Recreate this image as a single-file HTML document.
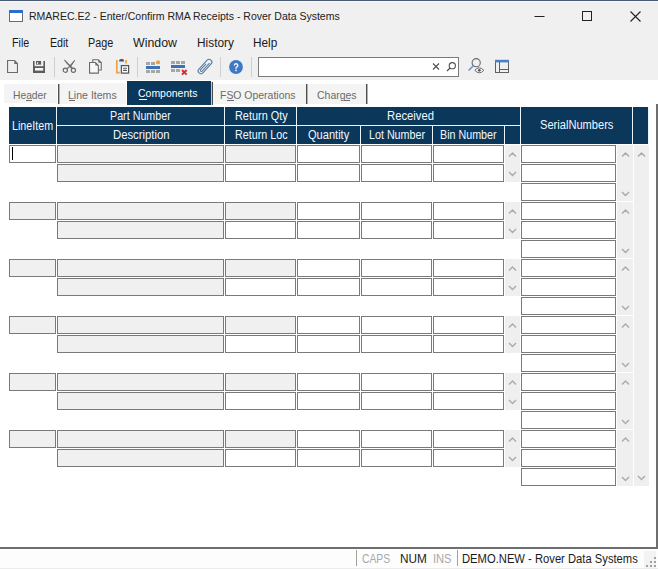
<!DOCTYPE html>
<html><head><meta charset="utf-8"><style>
html,body{margin:0;padding:0;background:#fff;width:658px;height:569px;overflow:hidden;position:relative;font-family:"Liberation Sans", sans-serif}
</style></head><body>
<div style="position:absolute;left:0px;top:0px;width:658px;height:80px;background:#f0f0f0"></div>
<div style="position:absolute;left:0px;top:0px;width:658px;height:1px;background:#4b5b73"></div>
<div style="position:absolute;left:0px;top:1px;width:658px;height:1px;background:#f6f7fb"></div>
<svg style="position:absolute;left:9px;top:10px" width="14" height="12" viewBox="0 0 14 12"><rect x="0.5" y="0.5" width="13" height="11" fill="#fff" stroke="#6b6b6b" stroke-width="1"/><rect x="0" y="0" width="14" height="3" fill="#2a6fd0"/></svg>
<svg style="position:absolute;left:530px;top:8px" width="120" height="18" viewBox="0 0 120 18"><path d="M4.5 8.5h10" stroke="#222" stroke-width="1"/><rect x="52.5" y="3.5" width="9" height="9" fill="none" stroke="#222" stroke-width="1"/><path d="M100.5 3.5l10 10M110.5 3.5l-10 10" stroke="#222" stroke-width="1.1"/></svg>
<div style="position:absolute;left:54px;top:57px;width:1px;height:20px;background:#d0d0d0"></div>
<div style="position:absolute;left:137px;top:57px;width:1px;height:20px;background:#d0d0d0"></div>
<div style="position:absolute;left:220px;top:57px;width:1px;height:20px;background:#d0d0d0"></div>
<div style="position:absolute;left:251px;top:57px;width:1px;height:20px;background:#d0d0d0"></div>
<svg style="position:absolute;left:7px;top:60px" width="11" height="13" viewBox="0 0 11 13"><path d="M0.55 0.55h7l2.9 2.9v9h-9.9z" fill="none" stroke="#6b6b6b" stroke-width="1.1"/><path d="M7.3 0.5v3.4h3.4z" fill="#6b6b6b"/></svg>
<svg style="position:absolute;left:33px;top:61px" width="12" height="12" viewBox="0 0 12 12"><rect x="0" y="0" width="12" height="12" fill="#5c5c5c"/><rect x="1.6" y="0" width="8.8" height="5.2" fill="#f0f0f0"/><rect x="3" y="0" width="5.1" height="3.6" fill="#5c5c5c"/><rect x="3.9" y="1.2" width="1.2" height="1.7" fill="#f0f0f0"/><rect x="2" y="7" width="8.2" height="2.6" fill="#f4f4f4"/></svg>
<svg style="position:absolute;left:62px;top:59px" width="15" height="15" viewBox="0 0 15 15"><path d="M1.8 0.9L2.9 0.7L10.6 8.4L9.6 9.9L4.6 4.6z" fill="#6b6b6b"/><path d="M12.4 0.9L13.2 1.5L8.6 8.3L7.0 7.2z" fill="#6b6b6b"/><path d="M7.6 7.8L4.8 9.7M9.9 9.0L10.6 9.6" stroke="#6b6b6b" stroke-width="1.2"/><circle cx="3.3" cy="11.2" r="2.1" fill="none" stroke="#6b6b6b" stroke-width="1.2"/><circle cx="11.4" cy="11.2" r="2.1" fill="none" stroke="#6b6b6b" stroke-width="1.2"/></svg>
<svg style="position:absolute;left:89px;top:59px" width="13" height="15" viewBox="0 0 13 15"><path d="M3.75 0.75h5.5l3 3v7.3h-8.5z" fill="#f4f4f4" stroke="#6b6b6b" stroke-width="1.1"/><path d="M9.4 0.4v3.4h3.4z" fill="#6b6b6b"/><path d="M0.55 3.55h5.8l3 3v7.6h-8.8z" fill="#f8f8f8" stroke="#6b6b6b" stroke-width="1.1"/><path d="M6.4 3.2v3.4h3.4z" fill="#6b6b6b"/></svg>
<svg style="position:absolute;left:115px;top:58px" width="15" height="17" viewBox="0 0 15 17"><rect x="2" y="2.5" width="9" height="12" fill="#e4f0fb"/><path d="M1.8 2v12.7h3" fill="none" stroke="#f0a048" stroke-width="1.7"/><path d="M11.1 2v3.4" fill="none" stroke="#f0a048" stroke-width="1.7"/><path d="M4.2 3.6v-1a1.6 1.6 0 0 1 1.6-1.6h1.6a1.6 1.6 0 0 1 1.6 1.6v1z" fill="#555"/><rect x="6.4" y="7.6" width="7.2" height="7.5" fill="#fff" stroke="#555" stroke-width="1.25"/><path d="M8.1 10.3h3.8M8.1 12.4h3.8" stroke="#555" stroke-width="1.1"/></svg>
<svg style="position:absolute;left:145px;top:59px" width="17" height="15" viewBox="0 0 17 15"><rect x="1" y="3" width="4" height="3" fill="#a6a6a6"/><rect x="6" y="3" width="4" height="3" fill="#a6a6a6"/><rect x="11" y="1.5" width="4" height="3.8" rx="1.3" fill="#eba048"/><rect x="1" y="7" width="14" height="3" fill="#3c72b4"/><rect x="1" y="11" width="4" height="3" fill="#a6a6a6"/><rect x="6" y="11" width="4" height="3" fill="#a6a6a6"/><rect x="11" y="11" width="4" height="3" fill="#a6a6a6"/></svg>
<svg style="position:absolute;left:170px;top:59px" width="19" height="17" viewBox="0 0 19 17"><rect x="1" y="2" width="4" height="3" fill="#a6a6a6"/><rect x="6" y="2" width="4" height="3" fill="#a6a6a6"/><rect x="11" y="2" width="4" height="3" fill="#a6a6a6"/><rect x="1" y="6" width="14" height="3" fill="#3c72b4"/><rect x="1" y="10" width="4" height="3" fill="#a6a6a6"/><rect x="6" y="10" width="4" height="3" fill="#a6a6a6"/><path d="M12 11l4.6 4.6M16.6 11l-4.6 4.6" stroke="#d42a3c" stroke-width="2"/></svg>
<svg style="position:absolute;left:196px;top:57px" width="18" height="19" viewBox="0 0 18 19"><g transform="translate(9,9.5) rotate(-47) scale(0.86)"><rect x="-10.2" y="-3.2" width="20.4" height="6.4" rx="3.2" fill="#e3f0fc" stroke="#5d7898" stroke-width="1.2"/><path d="M6.5 1.2H-6.2a1.2 1.2 0 0 1 0-2.4H3" fill="none" stroke="#5d7898" stroke-width="1.1"/></g></svg>
<svg style="position:absolute;left:229px;top:60px" width="15" height="15" viewBox="0 0 15 15"><circle cx="7" cy="7" r="6.9" fill="#3f78c4"/><path d="M5.3 5.5a1.75 1.75 0 1 1 2.3 1.7c-.45.2-.6.45-.6 1v.5" fill="none" stroke="#f4f8ff" stroke-width="1.4"/><rect x="6.25" y="9.6" width="1.5" height="1.6" fill="#f4f8ff"/></svg>
<div style="position:absolute;left:258px;top:57px;width:201px;height:20px;background:#fff;border:1px solid #7a7a7a;box-sizing:border-box"></div>
<svg style="position:absolute;left:430px;top:61px" width="28" height="12" viewBox="0 0 28 12"><path d="M3 2.5l6 6M9 2.5l-6 6" stroke="#505050" stroke-width="1.1"/><circle cx="22.3" cy="4.7" r="3.1" fill="none" stroke="#505050" stroke-width="1.1"/><path d="M20 7l-3 3" stroke="#505050" stroke-width="1.3"/></svg>
<svg style="position:absolute;left:466px;top:57px" width="20" height="18" viewBox="0 0 20 18"><circle cx="10.2" cy="5.7" r="4.1" fill="none" stroke="#626a76" stroke-width="1.1"/><path d="M7.3 8.8L2.6 13.5" stroke="#6a92c8" stroke-width="1.6"/><path d="M8.8 13.3q4.4-5 9 0q-4.5 5-9 0z" fill="#fff" stroke="#666" stroke-width="1"/><circle cx="13.3" cy="13.3" r="1.4" fill="#555"/></svg>
<svg style="position:absolute;left:494px;top:59px" width="16" height="15" viewBox="0 0 16 15"><rect x="1.5" y="1.5" width="13" height="12" fill="none" stroke="#606060" stroke-width="1"/><rect x="1" y="0.8" width="14" height="2.6" fill="#4a80c4"/><path d="M5.5 3v11M5.5 10.5h9" stroke="#606060" stroke-width="1"/></svg>
<div style="position:absolute;left:4px;top:84px;width:53px;height:19px;background:#f4f4f4"></div>
<div style="position:absolute;left:58px;top:84px;width:1px;height:20px;background:#505050"></div>
<div style="position:absolute;left:59px;top:84px;width:1px;height:20px;background:#b0b0b0"></div>
<div style="position:absolute;left:60px;top:83px;width:66px;height:21px;background:#f4f4f4"></div>
<div style="position:absolute;left:127px;top:81px;width:84px;height:24px;background:#0b375b"></div>
<div style="position:absolute;left:211px;top:82px;width:1px;height:23px;background:#b8c8d8"></div>
<div style="position:absolute;left:212px;top:82px;width:1px;height:23px;background:#4a4a4a"></div>
<div style="position:absolute;left:213px;top:84px;width:93px;height:20px;background:#f4f4f4"></div>
<div style="position:absolute;left:306px;top:84px;width:1px;height:20px;background:#505050"></div>
<div style="position:absolute;left:307px;top:84px;width:1px;height:20px;background:#b0b0b0"></div>
<div style="position:absolute;left:308px;top:84px;width:58px;height:20px;background:#f4f4f4"></div>
<div style="position:absolute;left:366px;top:84px;width:1px;height:20px;background:#505050"></div>
<div style="position:absolute;left:367px;top:84px;width:1px;height:20px;background:#b0b0b0"></div>
<div style="position:absolute;left:26px;top:100px;width:6px;height:1px;background:#6a6a6a"></div>
<div style="position:absolute;left:69px;top:100px;width:6px;height:1px;background:#6a6a6a"></div>
<div style="position:absolute;left:139px;top:99px;width:8px;height:1px;background:#fff"></div>
<div style="position:absolute;left:227px;top:100px;width:7px;height:1px;background:#6a6a6a"></div>
<div style="position:absolute;left:344px;top:100px;width:6px;height:1px;background:#6a6a6a"></div>
<div style="position:absolute;left:656px;top:104px;width:2px;height:445px;background:#6e6e6e"></div>
<div style="position:absolute;left:0px;top:547px;width:658px;height:2px;background:#6e6e6e"></div>
<div style="position:absolute;left:9px;top:107px;width:640px;height:37px;background:#eaf4fb"></div>
<div style="position:absolute;left:9px;top:107px;width:47px;height:37px;background:#0b375b"></div>
<div style="position:absolute;left:57px;top:107px;width:167px;height:18px;background:#0b375b"></div>
<div style="position:absolute;left:57px;top:126px;width:167px;height:18px;background:#0b375b"></div>
<div style="position:absolute;left:225px;top:107px;width:71px;height:18px;background:#0b375b"></div>
<div style="position:absolute;left:225px;top:126px;width:71px;height:18px;background:#0b375b"></div>
<div style="position:absolute;left:297px;top:107px;width:223px;height:18px;background:#0b375b"></div>
<div style="position:absolute;left:297px;top:126px;width:63px;height:18px;background:#0b375b"></div>
<div style="position:absolute;left:361px;top:126px;width:71px;height:18px;background:#0b375b"></div>
<div style="position:absolute;left:433px;top:126px;width:71px;height:18px;background:#0b375b"></div>
<div style="position:absolute;left:505px;top:126px;width:15px;height:18px;background:#0b375b"></div>
<div style="position:absolute;left:521px;top:107px;width:111px;height:37px;background:#0b375b"></div>
<div style="position:absolute;left:633px;top:107px;width:15px;height:37px;background:#0b375b"></div>
<div style="position:absolute;left:9px;top:145px;width:47px;height:18px;background:#fff;border:1px solid #7a7a7a;box-sizing:border-box"></div>
<div style="position:absolute;left:57px;top:145px;width:167px;height:18px;background:#f0f0f0;border:1px solid #7a7a7a;box-sizing:border-box"></div>
<div style="position:absolute;left:57px;top:164px;width:167px;height:18px;background:#f0f0f0;border:1px solid #7a7a7a;box-sizing:border-box"></div>
<div style="position:absolute;left:225px;top:145px;width:71px;height:18px;background:#f0f0f0;border:1px solid #7a7a7a;box-sizing:border-box"></div>
<div style="position:absolute;left:225px;top:164px;width:71px;height:18px;background:#fff;border:1px solid #7a7a7a;box-sizing:border-box"></div>
<div style="position:absolute;left:297px;top:145px;width:63px;height:18px;background:#fff;border:1px solid #7a7a7a;box-sizing:border-box"></div>
<div style="position:absolute;left:297px;top:164px;width:63px;height:18px;background:#fff;border:1px solid #7a7a7a;box-sizing:border-box"></div>
<div style="position:absolute;left:361px;top:145px;width:71px;height:18px;background:#fff;border:1px solid #7a7a7a;box-sizing:border-box"></div>
<div style="position:absolute;left:361px;top:164px;width:71px;height:18px;background:#fff;border:1px solid #7a7a7a;box-sizing:border-box"></div>
<div style="position:absolute;left:433px;top:145px;width:71px;height:18px;background:#fff;border:1px solid #7a7a7a;box-sizing:border-box"></div>
<div style="position:absolute;left:433px;top:164px;width:71px;height:18px;background:#fff;border:1px solid #7a7a7a;box-sizing:border-box"></div>
<div style="position:absolute;left:505px;top:145px;width:15px;height:37px;background:#efefef"></div>
<div style="position:absolute;left:521px;top:145px;width:95px;height:18px;background:#fff;border:1px solid #7a7a7a;box-sizing:border-box"></div>
<div style="position:absolute;left:521px;top:164px;width:95px;height:18px;background:#fff;border:1px solid #7a7a7a;box-sizing:border-box"></div>
<div style="position:absolute;left:521px;top:183px;width:95px;height:18px;background:#fff;border:1px solid #7a7a7a;box-sizing:border-box"></div>
<div style="position:absolute;left:617px;top:145px;width:16px;height:56px;background:#efefef"></div>
<div style="position:absolute;left:9px;top:202px;width:47px;height:18px;background:#f0f0f0;border:1px solid #7a7a7a;box-sizing:border-box"></div>
<div style="position:absolute;left:57px;top:202px;width:167px;height:18px;background:#f0f0f0;border:1px solid #7a7a7a;box-sizing:border-box"></div>
<div style="position:absolute;left:57px;top:221px;width:167px;height:18px;background:#f0f0f0;border:1px solid #7a7a7a;box-sizing:border-box"></div>
<div style="position:absolute;left:225px;top:202px;width:71px;height:18px;background:#f0f0f0;border:1px solid #7a7a7a;box-sizing:border-box"></div>
<div style="position:absolute;left:225px;top:221px;width:71px;height:18px;background:#fff;border:1px solid #7a7a7a;box-sizing:border-box"></div>
<div style="position:absolute;left:297px;top:202px;width:63px;height:18px;background:#fff;border:1px solid #7a7a7a;box-sizing:border-box"></div>
<div style="position:absolute;left:297px;top:221px;width:63px;height:18px;background:#fff;border:1px solid #7a7a7a;box-sizing:border-box"></div>
<div style="position:absolute;left:361px;top:202px;width:71px;height:18px;background:#fff;border:1px solid #7a7a7a;box-sizing:border-box"></div>
<div style="position:absolute;left:361px;top:221px;width:71px;height:18px;background:#fff;border:1px solid #7a7a7a;box-sizing:border-box"></div>
<div style="position:absolute;left:433px;top:202px;width:71px;height:18px;background:#fff;border:1px solid #7a7a7a;box-sizing:border-box"></div>
<div style="position:absolute;left:433px;top:221px;width:71px;height:18px;background:#fff;border:1px solid #7a7a7a;box-sizing:border-box"></div>
<div style="position:absolute;left:505px;top:202px;width:15px;height:37px;background:#efefef"></div>
<div style="position:absolute;left:521px;top:202px;width:95px;height:18px;background:#fff;border:1px solid #7a7a7a;box-sizing:border-box"></div>
<div style="position:absolute;left:521px;top:221px;width:95px;height:18px;background:#fff;border:1px solid #7a7a7a;box-sizing:border-box"></div>
<div style="position:absolute;left:521px;top:240px;width:95px;height:18px;background:#fff;border:1px solid #7a7a7a;box-sizing:border-box"></div>
<div style="position:absolute;left:617px;top:202px;width:16px;height:56px;background:#efefef"></div>
<div style="position:absolute;left:9px;top:259px;width:47px;height:18px;background:#f0f0f0;border:1px solid #7a7a7a;box-sizing:border-box"></div>
<div style="position:absolute;left:57px;top:259px;width:167px;height:18px;background:#f0f0f0;border:1px solid #7a7a7a;box-sizing:border-box"></div>
<div style="position:absolute;left:57px;top:278px;width:167px;height:18px;background:#f0f0f0;border:1px solid #7a7a7a;box-sizing:border-box"></div>
<div style="position:absolute;left:225px;top:259px;width:71px;height:18px;background:#f0f0f0;border:1px solid #7a7a7a;box-sizing:border-box"></div>
<div style="position:absolute;left:225px;top:278px;width:71px;height:18px;background:#fff;border:1px solid #7a7a7a;box-sizing:border-box"></div>
<div style="position:absolute;left:297px;top:259px;width:63px;height:18px;background:#fff;border:1px solid #7a7a7a;box-sizing:border-box"></div>
<div style="position:absolute;left:297px;top:278px;width:63px;height:18px;background:#fff;border:1px solid #7a7a7a;box-sizing:border-box"></div>
<div style="position:absolute;left:361px;top:259px;width:71px;height:18px;background:#fff;border:1px solid #7a7a7a;box-sizing:border-box"></div>
<div style="position:absolute;left:361px;top:278px;width:71px;height:18px;background:#fff;border:1px solid #7a7a7a;box-sizing:border-box"></div>
<div style="position:absolute;left:433px;top:259px;width:71px;height:18px;background:#fff;border:1px solid #7a7a7a;box-sizing:border-box"></div>
<div style="position:absolute;left:433px;top:278px;width:71px;height:18px;background:#fff;border:1px solid #7a7a7a;box-sizing:border-box"></div>
<div style="position:absolute;left:505px;top:259px;width:15px;height:37px;background:#efefef"></div>
<div style="position:absolute;left:521px;top:259px;width:95px;height:18px;background:#fff;border:1px solid #7a7a7a;box-sizing:border-box"></div>
<div style="position:absolute;left:521px;top:278px;width:95px;height:18px;background:#fff;border:1px solid #7a7a7a;box-sizing:border-box"></div>
<div style="position:absolute;left:521px;top:297px;width:95px;height:18px;background:#fff;border:1px solid #7a7a7a;box-sizing:border-box"></div>
<div style="position:absolute;left:617px;top:259px;width:16px;height:56px;background:#efefef"></div>
<div style="position:absolute;left:9px;top:316px;width:47px;height:18px;background:#f0f0f0;border:1px solid #7a7a7a;box-sizing:border-box"></div>
<div style="position:absolute;left:57px;top:316px;width:167px;height:18px;background:#f0f0f0;border:1px solid #7a7a7a;box-sizing:border-box"></div>
<div style="position:absolute;left:57px;top:335px;width:167px;height:18px;background:#f0f0f0;border:1px solid #7a7a7a;box-sizing:border-box"></div>
<div style="position:absolute;left:225px;top:316px;width:71px;height:18px;background:#f0f0f0;border:1px solid #7a7a7a;box-sizing:border-box"></div>
<div style="position:absolute;left:225px;top:335px;width:71px;height:18px;background:#fff;border:1px solid #7a7a7a;box-sizing:border-box"></div>
<div style="position:absolute;left:297px;top:316px;width:63px;height:18px;background:#fff;border:1px solid #7a7a7a;box-sizing:border-box"></div>
<div style="position:absolute;left:297px;top:335px;width:63px;height:18px;background:#fff;border:1px solid #7a7a7a;box-sizing:border-box"></div>
<div style="position:absolute;left:361px;top:316px;width:71px;height:18px;background:#fff;border:1px solid #7a7a7a;box-sizing:border-box"></div>
<div style="position:absolute;left:361px;top:335px;width:71px;height:18px;background:#fff;border:1px solid #7a7a7a;box-sizing:border-box"></div>
<div style="position:absolute;left:433px;top:316px;width:71px;height:18px;background:#fff;border:1px solid #7a7a7a;box-sizing:border-box"></div>
<div style="position:absolute;left:433px;top:335px;width:71px;height:18px;background:#fff;border:1px solid #7a7a7a;box-sizing:border-box"></div>
<div style="position:absolute;left:505px;top:316px;width:15px;height:37px;background:#efefef"></div>
<div style="position:absolute;left:521px;top:316px;width:95px;height:18px;background:#fff;border:1px solid #7a7a7a;box-sizing:border-box"></div>
<div style="position:absolute;left:521px;top:335px;width:95px;height:18px;background:#fff;border:1px solid #7a7a7a;box-sizing:border-box"></div>
<div style="position:absolute;left:521px;top:354px;width:95px;height:18px;background:#fff;border:1px solid #7a7a7a;box-sizing:border-box"></div>
<div style="position:absolute;left:617px;top:316px;width:16px;height:56px;background:#efefef"></div>
<div style="position:absolute;left:9px;top:373px;width:47px;height:18px;background:#f0f0f0;border:1px solid #7a7a7a;box-sizing:border-box"></div>
<div style="position:absolute;left:57px;top:373px;width:167px;height:18px;background:#f0f0f0;border:1px solid #7a7a7a;box-sizing:border-box"></div>
<div style="position:absolute;left:57px;top:392px;width:167px;height:18px;background:#f0f0f0;border:1px solid #7a7a7a;box-sizing:border-box"></div>
<div style="position:absolute;left:225px;top:373px;width:71px;height:18px;background:#f0f0f0;border:1px solid #7a7a7a;box-sizing:border-box"></div>
<div style="position:absolute;left:225px;top:392px;width:71px;height:18px;background:#fff;border:1px solid #7a7a7a;box-sizing:border-box"></div>
<div style="position:absolute;left:297px;top:373px;width:63px;height:18px;background:#fff;border:1px solid #7a7a7a;box-sizing:border-box"></div>
<div style="position:absolute;left:297px;top:392px;width:63px;height:18px;background:#fff;border:1px solid #7a7a7a;box-sizing:border-box"></div>
<div style="position:absolute;left:361px;top:373px;width:71px;height:18px;background:#fff;border:1px solid #7a7a7a;box-sizing:border-box"></div>
<div style="position:absolute;left:361px;top:392px;width:71px;height:18px;background:#fff;border:1px solid #7a7a7a;box-sizing:border-box"></div>
<div style="position:absolute;left:433px;top:373px;width:71px;height:18px;background:#fff;border:1px solid #7a7a7a;box-sizing:border-box"></div>
<div style="position:absolute;left:433px;top:392px;width:71px;height:18px;background:#fff;border:1px solid #7a7a7a;box-sizing:border-box"></div>
<div style="position:absolute;left:505px;top:373px;width:15px;height:37px;background:#efefef"></div>
<div style="position:absolute;left:521px;top:373px;width:95px;height:18px;background:#fff;border:1px solid #7a7a7a;box-sizing:border-box"></div>
<div style="position:absolute;left:521px;top:392px;width:95px;height:18px;background:#fff;border:1px solid #7a7a7a;box-sizing:border-box"></div>
<div style="position:absolute;left:521px;top:411px;width:95px;height:18px;background:#fff;border:1px solid #7a7a7a;box-sizing:border-box"></div>
<div style="position:absolute;left:617px;top:373px;width:16px;height:56px;background:#efefef"></div>
<div style="position:absolute;left:9px;top:430px;width:47px;height:18px;background:#f0f0f0;border:1px solid #7a7a7a;box-sizing:border-box"></div>
<div style="position:absolute;left:57px;top:430px;width:167px;height:18px;background:#f0f0f0;border:1px solid #7a7a7a;box-sizing:border-box"></div>
<div style="position:absolute;left:57px;top:449px;width:167px;height:18px;background:#f0f0f0;border:1px solid #7a7a7a;box-sizing:border-box"></div>
<div style="position:absolute;left:225px;top:430px;width:71px;height:18px;background:#f0f0f0;border:1px solid #7a7a7a;box-sizing:border-box"></div>
<div style="position:absolute;left:225px;top:449px;width:71px;height:18px;background:#fff;border:1px solid #7a7a7a;box-sizing:border-box"></div>
<div style="position:absolute;left:297px;top:430px;width:63px;height:18px;background:#fff;border:1px solid #7a7a7a;box-sizing:border-box"></div>
<div style="position:absolute;left:297px;top:449px;width:63px;height:18px;background:#fff;border:1px solid #7a7a7a;box-sizing:border-box"></div>
<div style="position:absolute;left:361px;top:430px;width:71px;height:18px;background:#fff;border:1px solid #7a7a7a;box-sizing:border-box"></div>
<div style="position:absolute;left:361px;top:449px;width:71px;height:18px;background:#fff;border:1px solid #7a7a7a;box-sizing:border-box"></div>
<div style="position:absolute;left:433px;top:430px;width:71px;height:18px;background:#fff;border:1px solid #7a7a7a;box-sizing:border-box"></div>
<div style="position:absolute;left:433px;top:449px;width:71px;height:18px;background:#fff;border:1px solid #7a7a7a;box-sizing:border-box"></div>
<div style="position:absolute;left:505px;top:430px;width:15px;height:37px;background:#efefef"></div>
<div style="position:absolute;left:521px;top:430px;width:95px;height:18px;background:#fff;border:1px solid #7a7a7a;box-sizing:border-box"></div>
<div style="position:absolute;left:521px;top:449px;width:95px;height:18px;background:#fff;border:1px solid #7a7a7a;box-sizing:border-box"></div>
<div style="position:absolute;left:521px;top:468px;width:95px;height:18px;background:#fff;border:1px solid #7a7a7a;box-sizing:border-box"></div>
<div style="position:absolute;left:617px;top:430px;width:16px;height:56px;background:#efefef"></div>
<div style="position:absolute;left:634px;top:145px;width:15px;height:341px;background:#efefef"></div>
<svg style="position:absolute;left:0;top:0" width="658" height="569"><path d="M509.0 156.5L512.5 153.0L516.0 156.5 M509.0 172L512.5 175.5L516.0 172 M622.0 156.5L625.5 153.0L629.0 156.5 M622.0 192L625.5 195.5L629.0 192 M509.0 213.5L512.5 210.0L516.0 213.5 M509.0 229L512.5 232.5L516.0 229 M622.0 213.5L625.5 210.0L629.0 213.5 M622.0 249L625.5 252.5L629.0 249 M509.0 270.5L512.5 267.0L516.0 270.5 M509.0 286L512.5 289.5L516.0 286 M622.0 270.5L625.5 267.0L629.0 270.5 M622.0 306L625.5 309.5L629.0 306 M509.0 327.5L512.5 324.0L516.0 327.5 M509.0 343L512.5 346.5L516.0 343 M622.0 327.5L625.5 324.0L629.0 327.5 M622.0 363L625.5 366.5L629.0 363 M509.0 384.5L512.5 381.0L516.0 384.5 M509.0 400L512.5 403.5L516.0 400 M622.0 384.5L625.5 381.0L629.0 384.5 M622.0 420L625.5 423.5L629.0 420 M509.0 441.5L512.5 438.0L516.0 441.5 M509.0 457L512.5 460.5L516.0 457 M622.0 441.5L625.5 438.0L629.0 441.5 M622.0 477L625.5 480.5L629.0 477 M638.0 156.5L641.5 153.0L645.0 156.5 M638.0 476L641.5 479.5L645.0 476" fill="none" stroke="#acacac" stroke-width="1.5"/></svg>
<div style="position:absolute;left:12px;top:147px;width:1px;height:13px;background:#000"></div>
<div style="position:absolute;left:0px;top:549px;width:658px;height:20px;background:#fdfdfd"></div>
<div style="position:absolute;left:0px;top:568px;width:658px;height:1px;background:#ececec"></div>
<div style="position:absolute;left:356px;top:550px;width:1px;height:16px;background:#a0a0a0"></div>
<div style="position:absolute;left:457px;top:550px;width:1px;height:16px;background:#a0a0a0"></div>
<div style="position:absolute;left:644px;top:551px;width:12px;height:17px;background:#f3f3f3"></div>
<div style="position:absolute;left:654px;top:557px;width:2px;height:2px;background:#a0a0a0"></div>
<div style="position:absolute;left:650px;top:561px;width:2px;height:2px;background:#a0a0a0"></div>
<div style="position:absolute;left:654px;top:561px;width:2px;height:2px;background:#a0a0a0"></div>
<div style="position:absolute;left:646px;top:565px;width:2px;height:2px;background:#a0a0a0"></div>
<div style="position:absolute;left:650px;top:565px;width:2px;height:2px;background:#a0a0a0"></div>
<div style="position:absolute;left:654px;top:565px;width:2px;height:2px;background:#a0a0a0"></div>
<div style="position:absolute;left:28.70px;top:10.00px;font-size:11.5px;letter-spacing:0.000px;transform:scaleX(0.9139);transform-origin:0 0;color:#222;white-space:pre;line-height:normal">RMAREC.E2 - Enter/Confirm RMA Receipts - Rover Data Systems</div>
<div style="position:absolute;left:12.30px;top:36.00px;font-size:12px;letter-spacing:0.000px;transform:scaleX(0.8900);transform-origin:0 0;color:#1a1a1a;white-space:pre;line-height:normal">File</div>
<div style="position:absolute;left:49.60px;top:36.00px;font-size:12px;letter-spacing:0.000px;transform:scaleX(0.8855);transform-origin:0 0;color:#1a1a1a;white-space:pre;line-height:normal">Edit</div>
<div style="position:absolute;left:88.30px;top:36.00px;font-size:12px;letter-spacing:0.000px;transform:scaleX(0.8994);transform-origin:0 0;color:#1a1a1a;white-space:pre;line-height:normal">Page</div>
<div style="position:absolute;left:133.10px;top:36.00px;font-size:12px;letter-spacing:0.000px;transform:scaleX(1.0299);transform-origin:0 0;color:#1a1a1a;white-space:pre;line-height:normal">Window</div>
<div style="position:absolute;left:196.60px;top:36.00px;font-size:12px;letter-spacing:0.000px;transform:scaleX(0.9883);transform-origin:0 0;color:#1a1a1a;white-space:pre;line-height:normal">History</div>
<div style="position:absolute;left:253.20px;top:36.00px;font-size:12px;letter-spacing:0.000px;transform:scaleX(0.9838);transform-origin:0 0;color:#1a1a1a;white-space:pre;line-height:normal">Help</div>
<div style="position:absolute;left:12.60px;top:88.70px;font-size:11.5px;letter-spacing:0.000px;transform:scaleX(0.8947);transform-origin:0 0;color:#6a6a6a;white-space:pre;line-height:normal">Header</div>
<div style="position:absolute;left:68.20px;top:88.70px;font-size:11.5px;letter-spacing:0.000px;transform:scaleX(0.9174);transform-origin:0 0;color:#6a6a6a;white-space:pre;line-height:normal">Line Items</div>
<div style="position:absolute;left:138.40px;top:87.30px;font-size:11.5px;letter-spacing:0.000px;transform:scaleX(0.9106);transform-origin:0 0;color:#ffffff;white-space:pre;line-height:normal">Components</div>
<div style="position:absolute;left:219.60px;top:88.70px;font-size:11.5px;letter-spacing:0.000px;transform:scaleX(0.9083);transform-origin:0 0;color:#6a6a6a;white-space:pre;line-height:normal">FSO Operations</div>
<div style="position:absolute;left:316.70px;top:88.70px;font-size:11.5px;letter-spacing:0.000px;transform:scaleX(0.9104);transform-origin:0 0;color:#6a6a6a;white-space:pre;line-height:normal">Charges</div>
<div style="position:absolute;left:11.80px;top:119.00px;font-size:12px;letter-spacing:0.000px;transform:scaleX(0.8929);transform-origin:0 0;color:#f2f8ff;white-space:pre;line-height:normal">LineItem</div>
<div style="position:absolute;left:109.70px;top:109.00px;font-size:12px;letter-spacing:0.000px;transform:scaleX(0.8938);transform-origin:0 0;color:#f2f8ff;white-space:pre;line-height:normal">Part Number</div>
<div style="position:absolute;left:112.80px;top:128.00px;font-size:12px;letter-spacing:0.000px;transform:scaleX(0.9419);transform-origin:0 0;color:#f2f8ff;white-space:pre;line-height:normal">Description</div>
<div style="position:absolute;left:234.80px;top:109.00px;font-size:12px;letter-spacing:0.000px;transform:scaleX(0.9083);transform-origin:0 0;color:#f2f8ff;white-space:pre;line-height:normal">Return Qty</div>
<div style="position:absolute;left:234.80px;top:128.00px;font-size:12px;letter-spacing:0.000px;transform:scaleX(0.8978);transform-origin:0 0;color:#f2f8ff;white-space:pre;line-height:normal">Return Loc</div>
<div style="position:absolute;left:386.50px;top:109.00px;font-size:12px;letter-spacing:0.000px;transform:scaleX(0.9381);transform-origin:0 0;color:#f2f8ff;white-space:pre;line-height:normal">Received</div>
<div style="position:absolute;left:308.20px;top:128.00px;font-size:12px;letter-spacing:0.000px;transform:scaleX(0.9219);transform-origin:0 0;color:#f2f8ff;white-space:pre;line-height:normal">Quantity</div>
<div style="position:absolute;left:368.60px;top:128.00px;font-size:12px;letter-spacing:0.000px;transform:scaleX(0.8932);transform-origin:0 0;color:#f2f8ff;white-space:pre;line-height:normal">Lot Number</div>
<div style="position:absolute;left:440.30px;top:128.00px;font-size:12px;letter-spacing:0.000px;transform:scaleX(0.8933);transform-origin:0 0;color:#f2f8ff;white-space:pre;line-height:normal">Bin Number</div>
<div style="position:absolute;left:539.90px;top:118.00px;font-size:12px;letter-spacing:0.000px;transform:scaleX(0.9249);transform-origin:0 0;color:#f2f8ff;white-space:pre;line-height:normal">SerialNumbers</div>
<div style="position:absolute;left:361.70px;top:551.60px;font-size:12px;letter-spacing:0.000px;transform:scaleX(0.8600);transform-origin:0 0;color:#a8a8a8;white-space:pre;line-height:normal">CAPS</div>
<div style="position:absolute;left:399.80px;top:551.60px;font-size:12px;letter-spacing:0.000px;transform:scaleX(0.9805);transform-origin:0 0;color:#1a1a1a;white-space:pre;line-height:normal">NUM</div>
<div style="position:absolute;left:433.47px;top:551.60px;font-size:12px;letter-spacing:0.000px;transform:scaleX(0.9263);transform-origin:0 0;color:#a8a8a8;white-space:pre;line-height:normal">INS</div>
<div style="position:absolute;left:461.70px;top:551.60px;font-size:12px;letter-spacing:0.000px;transform:scaleX(0.9350);transform-origin:0 0;color:#1a1a1a;white-space:pre;line-height:normal">DEMO.NEW - Rover Data Systems</div>
</body></html>
